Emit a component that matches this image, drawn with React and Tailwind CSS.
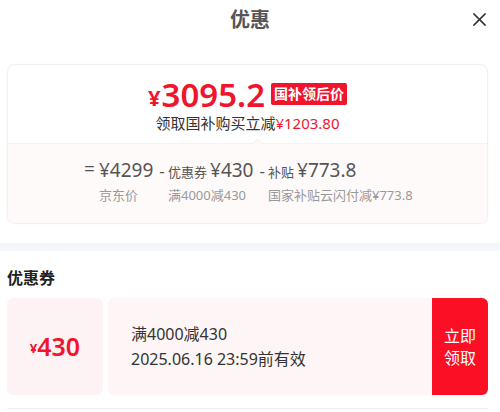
import React from 'react'

const App = () => {
  return (
    <div className="w-[500px] h-[412px] bg-white overflow-hidden font-['Noto_Sans','Noto_Sans_CJK_SC',sans-serif]">
      {/* Header */}
      <div className="relative h-[40px] flex items-center justify-center">
        <span className="text-[20px] font-bold text-[#555] leading-none">优惠</span>
        <svg className="absolute right-[13px] top-[12px]" width="15" height="15" viewBox="0 0 16 16" fill="none" stroke="#333" strokeWidth="1.6" strokeLinecap="round">
          <path d="M2 2 L14 14 M14 2 L2 14" />
        </svg>
      </div>

      {/* Summary card */}
      <div className="ml-[7px] mr-[12px] mt-[24px] rounded-[8px] border border-[#f0f0f0] shadow-[0_0_3px_rgba(0,0,0,0.04)] overflow-hidden">
        <div className="relative h-[78px] flex flex-col items-center pt-[11px]">
          <div className="flex items-center h-[36px]">
            <span className="text-[#f0142d] font-bold text-[22px] leading-none mt-[6px] mr-[1px]">¥</span>
            <span className="text-[#f0142d] font-semibold text-[33px] leading-none">3095.2</span>
            <span className="ml-[6px] bg-[#f0142d] text-white text-[14px] font-bold leading-none px-[3px] py-[4px] rounded-[2px]">国补领后价</span>
          </div>
          <div className="mt-[2px] text-[15px] leading-[18px] text-[#333]">
            领取国补购买立减<span className="text-[#f0142d]">¥1203.80</span>
          </div>
          <div className="absolute bottom-[-4px] left-[246px] w-[7px] h-[7px] rotate-45 bg-[#fffafa] border-l border-t border-[#fbeeee]"></div>
        </div>
        <div className="h-[80px] bg-[#fffafa] border-t border-[#fbf0f0] pl-[91px] pt-[17px]">
          <div className="relative flex items-baseline text-[#555] leading-none">
            <span className="absolute -left-[15px] bottom-[1px] text-[19px]">=</span>
            <div className="w-[69px] flex items-baseline">
              <span className="text-[19px]">¥4299</span>
              <span className="text-[17px] ml-[6px]">-</span>
            </div>
            <div className="w-[100px] flex items-baseline">
              <span className="text-[13px] mr-[3px]">优惠券</span>
              <span className="text-[19px]">¥430</span>
              <span className="text-[17px] ml-[6px]">-</span>
            </div>
            <div className="flex items-baseline">
              <span className="text-[13px] mr-[3px]">补贴</span>
              <span className="text-[19px]">¥773.8</span>
            </div>
          </div>
          <div className="flex text-[13px] text-[#999] leading-none mt-[9px]">
            <span className="w-[69px]">京东价</span>
            <span className="w-[100px]">满4000减430</span>
            <span>国家补贴云闪付减¥773.8</span>
          </div>
        </div>
      </div>

      {/* Divider band */}
      <div className="mt-[19px] h-[8px] bg-[#f5f6fa]"></div>

      {/* Coupons */}
      <div className="pl-[7px] pr-[12px]">
        <div className="pt-[17px] pb-[10px] text-[16px] font-bold text-[#222] leading-[20px]">优惠券</div>
        <div className="flex h-[97px] gap-[5px]">
          <div className="w-[96px] bg-[#fdf3f4] rounded-[6px] flex items-center justify-center text-[#f0142d]">
            <span className="text-[13px] font-bold mt-[5px]">¥</span>
            <span className="text-[25px] font-semibold leading-none">430</span>
          </div>
          <div className="flex-1 flex rounded-[6px] overflow-hidden">
            <div className="flex-1 bg-[#fdf5f6] flex flex-col justify-center pl-[23px] text-[#333] text-[16px] leading-[25px]">
              <span>满4000减430</span>
              <span>2025.06.16 23:59前有效</span>
            </div>
            <div className="w-[56px] bg-[#fa0f25] flex flex-col items-center justify-center text-white text-[16px] leading-[22px]">
              <span>立即</span>
              <span>领取</span>
            </div>
          </div>
        </div>
        <div className="mt-[13px] h-px bg-[#f0f0f0]"></div>
      </div>
    </div>
  )
}

export default App
